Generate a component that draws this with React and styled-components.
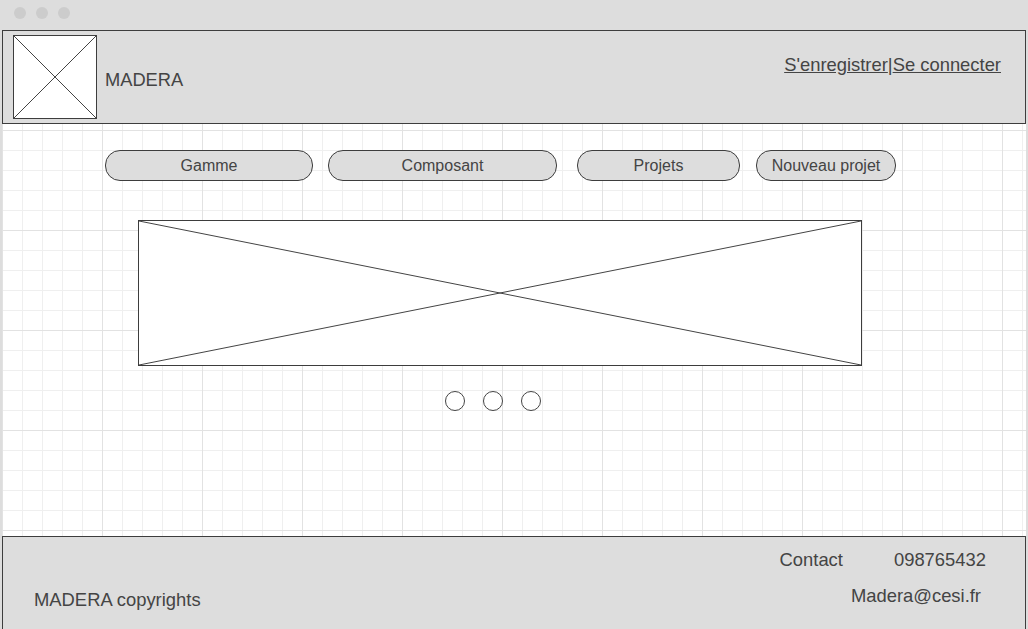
import React from "react";
import styled, { createGlobalStyle } from "styled-components";

const GlobalStyle = createGlobalStyle`
  html, body {
    margin: 0;
    padding: 0;
    background: #dddddd;
  }
  body {
    font-family: "Liberation Sans", Arial, sans-serif;
    color: #444444;
  }
`;

const Window = styled.div`
  width: 1028px;
  height: 629px;
  display: flex;
  flex-direction: column;
  background: #dddddd;
  overflow: hidden;
`;

const TitleBar = styled.div`
  height: 30px;
  flex: none;
  display: flex;
  align-items: center;
  gap: 10px;
  padding: 0 0 4px 14px;
  box-sizing: border-box;
`;

const Light = styled.span`
  width: 12px;
  height: 12px;
  border-radius: 50%;
  background: #cccccc;
`;

const Body = styled.div`
  flex: 1;
  display: flex;
  flex-direction: column;
  margin: 0 2px;
  background-color: #ffffff;
  background-image:
    linear-gradient(to right, #e2e2e2 1px, transparent 1px),
    linear-gradient(to bottom, #e2e2e2 1px, transparent 1px),
    linear-gradient(to right, #efefef 1px, transparent 1px),
    linear-gradient(to bottom, #efefef 1px, transparent 1px);
  background-size: 100px 100px, 100px 100px, 20px 20px, 20px 20px;
  background-position: 0 100px, 0 100px, 0 0, 0 0;
`;

const Header = styled.header`
  height: 94px;
  flex: none;
  box-sizing: border-box;
  display: flex;
  align-items: flex-start;
  border: 1px solid #3d3d3d;
  background: #dddddd;
  padding: 4px 24px 0 10px;
`;

const Placeholder = styled.div`
  width: ${(p) => p.$w}px;
  height: ${(p) => p.$h}px;
  box-sizing: border-box;
  border: 1px solid #3d3d3d;
  background: #ffffff;
  flex: none;

  svg {
    display: block;
    width: 100%;
    height: 100%;
  }
`;

const Brand = styled.span`
  font-size: 18.3px;
  margin: 34px 0 0 8px;
  color: #444444;
`;

const Auth = styled.div`
  margin: 19px 0 0 auto;
  font-size: 18.4px;
  color: #444444;

  a {
    color: inherit;
    text-decoration: underline;
  }
`;

const Main = styled.main`
  flex: 1;
  display: flex;
  flex-direction: column;
`;

const Nav = styled.nav`
  display: flex;
  margin: 26px 0 0 103px;
`;

const NavButton = styled.button`
  width: ${(p) => p.$w}px;
  margin-left: ${(p) => p.$ml || 0}px;
  height: 31px;
  border: 1px solid #3d3d3d;
  border-radius: 15px;
  background: #dddddd;
  color: #444444;
  font-family: "Liberation Sans", Arial, sans-serif;
  font-size: 16px;
  padding: 0;
`;

const Carousel = styled.section`
  margin: 39px 0 0 136px;
`;

const Dots = styled.div`
  display: flex;
  gap: 18px;
  margin: 25px 0 0 443px;
`;

const Dot = styled.span`
  width: 20px;
  height: 20px;
  box-sizing: border-box;
  border: 1px solid #444444;
  border-radius: 50%;
  background: #ffffff;
`;

const Footer = styled.footer`
  height: 93px;
  flex: none;
  box-sizing: border-box;
  display: flex;
  justify-content: space-between;
  border: 1px solid #3d3d3d;
  border-bottom: none;
  background: #dddddd;
  padding: 0 39px 0 31px;
  font-size: 18.4px;
  color: #444444;
`;

const Copyright = styled.span`
  margin-top: 52px;
`;

const ContactBlock = styled.div`
  display: flex;
  flex-direction: column;
  align-items: flex-end;
  padding-top: 12px;
  gap: 14px;
`;

const ContactRow = styled.div`
  display: flex;
  gap: 51px;
`;

const Email = styled.span`
  margin-right: 5px;
`;

const Cross = () => (
  <svg viewBox="0 0 100 100" preserveAspectRatio="none">
    <line x1="0" y1="0" x2="100" y2="100" stroke="#444" strokeWidth="1" vectorEffect="non-scaling-stroke" />
    <line x1="100" y1="0" x2="0" y2="100" stroke="#444" strokeWidth="1" vectorEffect="non-scaling-stroke" />
  </svg>
);

const navItems = [
  { label: "Gamme", w: 208, ml: 0 },
  { label: "Composant", w: 229, ml: 15 },
  { label: "Projets", w: 163, ml: 20 },
  { label: "Nouveau projet", w: 140, ml: 16 },
];

export default function App() {
  return (
    <>
      <GlobalStyle />
      <Window>
        <TitleBar>
          <Light />
          <Light />
          <Light />
        </TitleBar>
        <Body>
          <Header>
            <Placeholder $w={84} $h={84}>
              <Cross />
            </Placeholder>
            <Brand>MADERA</Brand>
            <Auth>
              <a href="#register">S'enregistrer</a>|<a href="#login">Se connecter</a>
            </Auth>
          </Header>
          <Main>
            <Nav>
              {navItems.map((item) => (
                <NavButton key={item.label} $w={item.w} $ml={item.ml}>
                  {item.label}
                </NavButton>
              ))}
            </Nav>
            <Carousel>
              <Placeholder $w={724} $h={146}>
                <Cross />
              </Placeholder>
            </Carousel>
            <Dots>
              <Dot />
              <Dot />
              <Dot />
            </Dots>
          </Main>
          <Footer>
            <Copyright>MADERA copyrights</Copyright>
            <ContactBlock>
              <ContactRow>
                <span>Contact</span>
                <span>098765432</span>
              </ContactRow>
              <Email>Madera@cesi.fr</Email>
            </ContactBlock>
          </Footer>
        </Body>
      </Window>
    </>
  );
}
